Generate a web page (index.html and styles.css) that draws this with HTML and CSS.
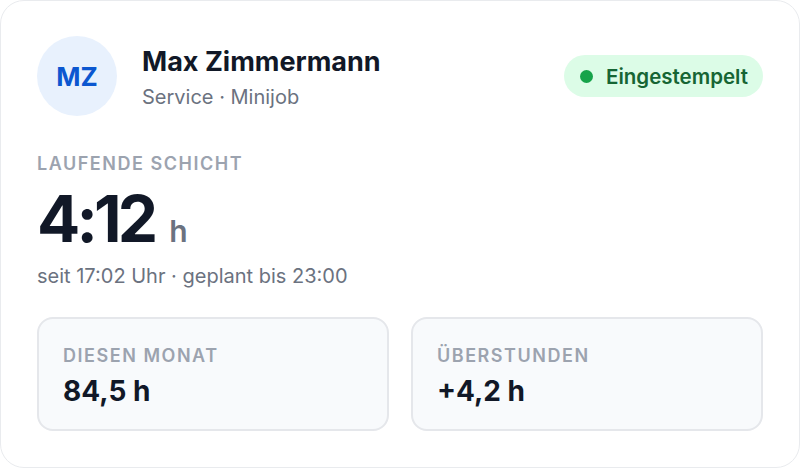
FILE: index.html
```html
<!doctype html>
<html>
    <head>
        <title>Schicht</title>
        <link rel="stylesheet" href="styles.css">
    </head>
    <body>
        <div class="card">
            <div class="head">
                <div class="avatar">MZ</div>
                <div class="who">
                    <h1>Max Zimmermann</h1>
                    <p>Service · Minijob</p>
                </div>
                <span class="badge"><i class="dot"></i>Eingestempelt</span>
            </div>

            <div class="shift">
                <div class="label">Laufende Schicht</div>
                <div class="time">4:12<span>h</span></div>
                <p class="since">seit 17:02 Uhr · geplant bis 23:00</p>
            </div>

            <div class="stats">
                <div class="stat">
                    <div class="label">Diesen Monat</div>
                    <div class="value">84,5 h</div>
                </div>
                <div class="stat">
                    <div class="label">Überstunden</div>
                    <div class="value">+4,2 h</div>
                </div>
            </div>
        </div>
    </body>
</html>
```

FILE: styles.css
```css
* {
    font-family: Inter, "Noto Sans", sans-serif;
    box-sizing: border-box;
}

body {
    background: #fff;
    margin: 0;
    padding: 0;
}

.card {
    width: 800px;
    height: 468px;
    border: 1px solid #e9ebee;
    border-radius: 24px;
    padding: 35px 36px;
    display: flex;
    flex-direction: column;
}

.head {
    display: flex;
    align-items: center;
    gap: 25px;
}

.avatar {
    width: 80px;
    height: 80px;
    border-radius: 50%;
    background: #e8f1fd;
    color: #0b57d0;
    font-size: 26px;
    font-weight: 700;
    display: flex;
    align-items: center;
    justify-content: center;
}

.who {
    flex: 1;
    padding-top: 4px;
}

h1 {
    font-size: 27px;
    font-weight: 700;
    color: #111827;
    margin: 0 0 6px;
    line-height: 32px;
}

.who p {
    margin: 0;
    font-size: 20px;
    line-height: 26px;
    color: #6b7280;
}

.badge {
    display: flex;
    align-items: center;
    gap: 13px;
    height: 42px;
    padding: 0 15px 0 16px;
    border-radius: 21px;
    background: #dcfce7;
    color: #166534;
    font-size: 20.5px;
    font-weight: 600;
}

.dot {
    width: 13px;
    height: 13px;
    border-radius: 50%;
    background: #16a34a;
}

.shift {
    margin-top: 37px;
}

.label {
    font-size: 18px;
    line-height: 22px;
    font-weight: 600;
    letter-spacing: 0.085em;
    text-transform: uppercase;
    color: #9ca3af;
}

.time {
    font-size: 64px;
    font-weight: 700;
    color: #111827;
    letter-spacing: -0.06em;
    line-height: 1;
    margin-top: 12px;
}

.time span {
    font-size: 30px;
    font-weight: 600;
    color: #6b7280;
    letter-spacing: 0;
    margin-left: 15px;
}

.since {
    margin: 13px 0 0;
    font-size: 20px;
    color: #6b7280;
}

.stats {
    display: grid;
    grid-template-columns: 1fr 1fr;
    gap: 22px;
    margin-top: 29px;
}

.stat {
    height: 114px;
    border: 2px solid #e5e7eb;
    border-radius: 16px;
    background: #f8fafc;
    padding: 26px 24px 0;
}

.value {
    font-size: 28px;
    font-weight: 700;
    color: #111827;
    margin-top: 7px;
}
```
